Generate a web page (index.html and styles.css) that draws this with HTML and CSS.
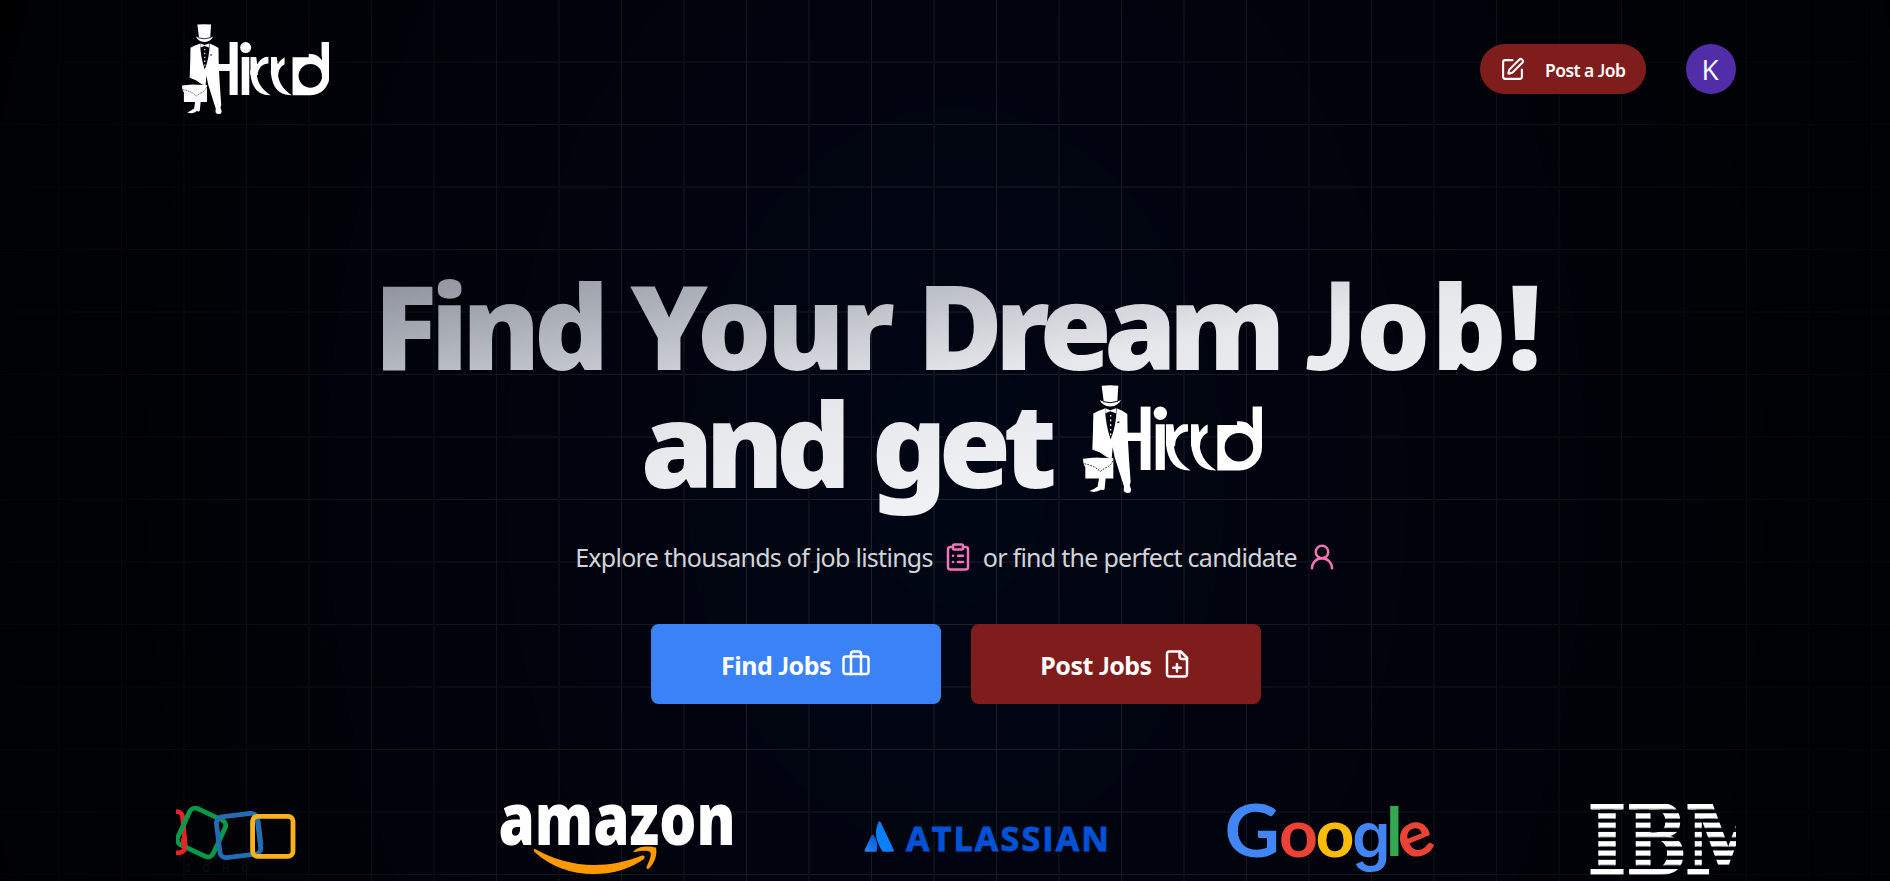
FILE: index.html
```html
<!DOCTYPE html>
<html lang="en">
<head>
<meta charset="utf-8">
<title>Hirrd</title>
<link rel="stylesheet" href="styles.css">
</head>
<body>
<div class="page">
  <div class="backdrop"></div>
  <header class="nav">
    <svg class="logo" viewBox="38 28 538 326" preserveAspectRatio="none" role="img" aria-label="Hirrd">
      <defs>
        <clipPath id="clipH"><rect x="160" y="93" width="90" height="200"/></clipPath>
        <clipPath id="clipI"><rect x="250" y="146" width="40" height="140"/></clipPath>
        <clipPath id="clipR1"><rect x="287" y="146" width="66" height="66"/></clipPath>
        <clipPath id="clipR2"><rect x="362" y="146" width="50" height="66"/></clipPath>
        <clipPath id="clipD"><rect x="500" y="93" width="75" height="124"/></clipPath>
      </defs>
      <g id="brand">
        <path d="M94 30Q120 27 144 30L141 77Q149 76 152 72Q146 90 120 93Q94 90 88 72Q92 77 100 77Z"/>
        <path class="ink" d="M98 78Q120 85 143 77" stroke-width="3"/>
        <path d="M104 98L100 100Q80 106 69 114L68 165L66 222L90 232L110 245L124 250L127 215L133 245L161 333L160 346Q165 354 176 353Q184 350 182 340L178 330L181 320L176 250L172 180L171 115Q155 104 139 98Q138 150 121 192Q106 150 104 98Z"/>
        <path d="M38 250L75 246L129 248V309H45V275Q39 270 38 250Z"/>
        <path d="M86 308H106L103 340Q100 346 92 342L84 347Q70 352 57 347Q70 342 82 333Z"/>
        <path d="M105 98L120 104L137 98V113L120 107L105 113Z"/>
        <path class="light" d="M121 118V186" stroke-width="4" stroke-dasharray="5 9"/>
        <path class="ink" d="M67 231Q82 226 95 238V247M74 246V238Q84 230 90 246" stroke-width="3.500"/>
        <path class="ink" d="M42 265Q60 268 75 276L90 288L105 277Q122 272 128 255" stroke-width="2.500" stroke-dasharray="5 4"/>
        <path class="ink" d="M141 141L147 139" stroke-width="4"/>
        <g class="word">
          <text x="65" y="285" clip-path="url(#clipH)">H</text>
          <text x="235" y="285" class="low" clip-path="url(#clipI)">i</text>
          <text x="266" y="285" class="low" clip-path="url(#clipR1)">r</text>
          <text x="341" y="285" class="low" clip-path="url(#clipR2)">r</text>
          <text x="431" y="285" clip-path="url(#clipD)">d</text>
        </g>
        <circle cx="270" cy="113" r="20"/>
        <path d="M311 195Q306 250 361 285Q294 287 287 205V195Z"/>
        <path d="M388 195Q384 250 438 285Q370 287 362 205V195Z"/>
        <path fill-rule="evenodd" d="M441 148H510Q534 150 550 165L575 200V217A68 68 0 0 1 507 285H441ZM506 172A43 43 0 1 0 506 258A43 43 0 1 0 506 172Z"/>
      </g>
    </svg>
    <div class="nav-actions">
      <button class="pill">
        <svg class="icon small" viewBox="0 0 24 24"><path d="M12 3H5a2 2 0 0 0-2 2v14a2 2 0 0 0 2 2h14a2 2 0 0 0 2-2v-7"/><path d="M18.375 2.625a1 1 0 0 1 3 3l-9.013 9.014a2 2 0 0 1-.853.505l-2.873.84a.5.5 0 0 1-.62-.62l.84-2.873a2 2 0 0 1 .506-.852z"/></svg>
        <span>Post a <span class="jj">J</span>ob</span>
      </button>
      <span class="avatar">K</span>
    </div>
  </header>
  <main>
    <h1 class="headline">
      <span class="line"><span class="w1">Find</span> <span class="w2">Your</span> <span class="w3">Dream</span> <span class="w4"><span class="jj">J</span>ob!</span></span>
      <span class="line second">and get</span>
      <svg class="logo-lg" viewBox="38 28 538 326" preserveAspectRatio="none"><use href="#brand"/></svg>
    </h1>
    <p class="sub">
      <span class="s1">Explore thousands of job listings</span>
      <svg class="icon pink" viewBox="0 0 24 24"><rect width="8" height="4" x="8" y="2" rx="1"/><path d="M16 4h2a2 2 0 0 1 2 2v14a2 2 0 0 1-2 2H6a2 2 0 0 1-2-2V6a2 2 0 0 1 2-2h2M12 11h4M12 16h4M8 11h.01M8 16h.01"/></svg>
      <span class="s2">or find the perfect candidate</span>
      <svg class="icon pink" viewBox="0 0 24 24"><circle cx="12" cy="8" r="5"/><path d="M20 21a8 8 0 0 0-16 0"/></svg>
    </p>
    <div class="cta">
      <button class="btn blue"><span>Find <span class="jj">J</span>obs</span><svg class="icon" viewBox="0 0 24 24"><path d="M16 20V4a2 2 0 0 0-2-2h-4a2 2 0 0 0-2 2v16"/><rect width="20" height="14" x="2" y="6" rx="2"/></svg></button>
      <button class="btn red"><span>Post <span class="jj">J</span>obs</span><svg class="icon" viewBox="0 0 24 24"><path d="M15 2H6a2 2 0 0 0-2 2v16a2 2 0 0 0 2 2h12a2 2 0 0 0 2-2V7Z"/><path d="M14 2v4a2 2 0 0 0 2 2h4M9 15h6M12 18v-6"/></svg></button>
    </div>
    <div class="brands">
      <svg class="zoho" width="122" height="81" viewBox="176 800 122 81">
        <g fill="none" stroke-width="4.800">
          <rect x="140" y="813" width="44" height="41" rx="6" stroke="#e42527" transform="rotate(-5 162 833)"/>
          <rect x="182" y="812.500" width="39" height="40" rx="6" stroke="#089949" transform="rotate(25 201.500 832.500)"/>
          <rect x="218" y="815" width="41" height="41" rx="6" stroke="#226db4" transform="rotate(-7 238.500 835)"/>
          <rect x="252.600" y="816.300" width="40.400" height="40" rx="5" stroke="#f9b21d"/>
          <path d="M258 820L261 845" stroke="#226db4"/>
          <path d="M183 838L184.500 850" stroke="#e42527"/>
        </g>
        <text x="185" y="872" font-size="10" textLength="64" fill="#0a0b0d" class="zoho-text">ZOHO</text>
      </svg>
      <svg class="amazon" width="238" height="81" viewBox="498 800 238 81">
        <text class="amazon-text" x="498.500" y="844.500" textLength="237" lengthAdjust="spacingAndGlyphs">amazon</text>
        <g fill="#ff9900">
          <path d="M535 849Q533 849 534 851.500C551 867 571 874 594 874C614 874 631 868 644 859Q646 855 642 855.500C626 862 610 865 594 865C573 865 553 859 535 849Z"/>
          <path d="M634 851C638 846 649 845.500 656 847.500C657.500 854 655 863 648.500 869Q645.500 869.500 647 866C650 859 652 854 650 852C647 850 641 851 635 852Q632.500 852 634 851Z"/>
        </g>
      </svg>
      <svg class="atlassian" width="248" height="81" viewBox="862 800 248 81">
        <defs><linearGradient id="at" x1="1" y1="0" x2="0" y2="1"><stop offset="0" stop-color="#0052cc"/><stop offset=".9" stop-color="#2684ff"/></linearGradient></defs>
        <path fill="url(#at)" d="M871.500 835.500Q872.500 834 873.500 835.500C878 841 878 846 876.500 851.700H865.500Q864 851.700 864.800 849.800Z"/>
        <path fill="#0a80ff" d="M878.500 822Q879.500 820.500 880.500 822L893.800 850Q894.300 851.700 892.800 851.700H883.500Q882.300 851.700 881.500 850C876 840 874 832 878.500 822Z"/>
        <text class="atlassian-text" x="906" y="851.400" textLength="203">ATLASSIAN</text>
      </svg>
      <svg class="google" width="210" height="81" viewBox="1225 800 210 81">
        <g class="google-text">
          <text x="1224.500" y="856.500" font-size="72" textLength="55.500" lengthAdjust="spacingAndGlyphs" fill="#4285f4">G</text>
          <text x="1279" y="856.500" font-size="67" textLength="39" lengthAdjust="spacingAndGlyphs" fill="#ea4335">o</text>
          <text x="1315.500" y="856.500" font-size="67" textLength="39" lengthAdjust="spacingAndGlyphs" fill="#fbbc05">o</text>
          <text x="1352" y="857.500" font-size="63" class="g" textLength="38.500" lengthAdjust="spacingAndGlyphs" fill="#4285f4">g</text>
          <text x="1386" y="856" font-size="67" fill="#34a853">l</text>
          <text font-size="65" textLength="35" lengthAdjust="spacingAndGlyphs" fill="#ea4335" transform="rotate(-22 1417 840)" x="1398.500" y="856">e</text>
        </g>
      </svg>
      <svg class="ibm" width="148" height="81" viewBox="1588 800 148 81">
        <defs><pattern id="bars" patternUnits="userSpaceOnUse" x="1500" y="804" width="400" height="9.300"><rect width="400" height="5.200" fill="#fff"/></pattern></defs>
        <g class="ibm-text" fill="url(#bars)" stroke="url(#bars)" stroke-width="2">
          <text x="1587.500" y="874" textLength="39" lengthAdjust="spacingAndGlyphs">I</text>
          <text x="1626.500" y="874" textLength="60" lengthAdjust="spacingAndGlyphs">B</text>
          <text x="1685" y="874" textLength="87" lengthAdjust="spacingAndGlyphs">M</text>
        </g>
      </svg>
    </div>
  </main>
</div>
</body>
</html>
```
FILE: styles.css
```css
*{box-sizing:border-box}
body{margin:0;background:#000;color:#fff;font-family:"Noto Sans","Open Sans",sans-serif;overflow:hidden}
.page{position:relative;height:881px;overflow:hidden;padding:0 154px 0 176px}
.backdrop{
  position:absolute;inset:0;
  background:
    linear-gradient(90deg,transparent 58px,#10141e 58px 60px,transparent 60px 121px,#20242e 121px 122px,transparent 122px) 0 0/125px 125px,
    linear-gradient(180deg,transparent 61px,#10141e 61px 63px,transparent 63px 124px,#20242e 124px 125px) 0 0/125px 125px,
    #010615;
  -webkit-mask-image:radial-gradient(ellipse 1080px 1500px at 956px 480px,#000 0,transparent 100%);
  mask-image:radial-gradient(ellipse 1080px 1500px at 956px 480px,#000 0,transparent 100%);
}
.nav,main{position:relative}
.nav{height:138px;display:flex;align-items:center;justify-content:space-between;padding-left:5.5px}
.logo{width:147.600px;height:90.400px;fill:#fff}
.logo-lg{width:179.300px;height:108.400px;fill:#fff;align-self:start;margin:2px 9.5px 0 33.500px}
.ink{fill:none;stroke:#02040f}
.light{fill:none;stroke:#fff}
.word{font-family:"Noto Sans",sans-serif;font-weight:500;font-size:269px;letter-spacing:0;word-spacing:0}
.low{font-size:256px}
.nav-actions{display:flex;align-items:center;gap:40px}
button{border:0;color:#fff;font-family:inherit;display:flex;align-items:center;justify-content:center}
.pill{width:166px;height:50px;border-radius:25px;background:#7f1d1d;font-size:17.500px;font-weight:600;letter-spacing:-.55px;padding:0 0 0 20px;gap:20px;white-space:nowrap;justify-content:flex-start}
.pill span{position:relative;top:.5px}
.avatar{width:50px;height:50px;border-radius:50%;background:#512da8;display:flex;align-items:center;justify-content:center;font:400 28px "Open Sans",sans-serif;padding:0 2px 1px 0}
.icon{width:30px;height:30px;flex:none;fill:none;stroke:currentColor;stroke-width:2;stroke-linecap:round;stroke-linejoin:round}
.icon.small{width:25px;height:25px}
.pink{color:#f472b6}
.jj{font-family:Lato,sans-serif}
.headline{
  margin:102px 0 0;padding:22.6px 0 17.4px;height:280px;
  display:flex;flex-wrap:wrap;justify-content:center;align-content:flex-start;
  font-size:117px;line-height:120px;font-weight:900;letter-spacing:-5px;white-space:nowrap;
  background:linear-gradient(to bottom right,#6b7280,#e5e7eb 50%,#fff);
  -webkit-background-clip:text;background-clip:text;color:transparent;
}
.line{height:120px}
.line:first-child{width:100%;padding-left:198px}
.w1{letter-spacing:-6.5px;margin-right:2px}
.w3{letter-spacing:-8px;margin:0 2px}
.w4{letter-spacing:1px}
.headline .jj{font-size:122px;letter-spacing:-2px}
.second{letter-spacing:-8px;word-spacing:6px}
.sub{margin:20px 0 0;display:flex;align-items:center;justify-content:center;height:34px;font-size:25px;letter-spacing:-.73px;color:#d1d5db;white-space:nowrap;gap:10px}
.cta{display:flex;justify-content:center;gap:30px;margin-top:50px}
.btn{width:290px;height:80px;border-radius:7.500px;font-size:25px;font-weight:700;letter-spacing:-.5px;gap:10px}
.btn>span{padding-top:2px}
.blue{background:#3b82f6}
.red{background:#7f1d1d}
.brands{display:flex;margin-top:96px}
.brands svg{flex:none}
.amazon{margin-left:200px}
.atlassian{margin-left:126px}
.google{margin-left:115px}
.ibm{margin-left:153px}
.zoho-text{font-family:"Open Sans",sans-serif;font-weight:700}
.amazon-text{font-family:"Open Sans",sans-serif;font-weight:800;font-size:73px;fill:#fff}
.atlassian-text{font-family:"Open Sans",sans-serif;font-weight:700;font-size:34px;fill:#0052d4;stroke:#0052d4;stroke-width:.9}
.google-text{font-family:Lato,sans-serif;font-weight:700}
.google-text .g{font-family:Inter,sans-serif;font-weight:600}
.ibm-text{font-family:"DejaVu Serif",serif;font-weight:700;font-size:96px}
```
